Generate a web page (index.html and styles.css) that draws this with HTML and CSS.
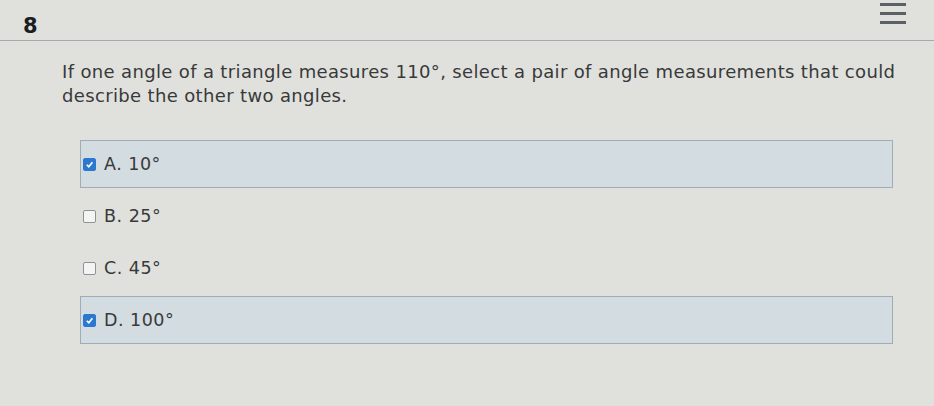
FILE: index.html
```html
<!DOCTYPE html>
<html lang="en">
<head>
    <meta charset="UTF-8">
    <title>Question 8</title>
    <link rel="stylesheet" href="styles.css">
</head>
<body>
<div class="header">
    <span class="number">8</span>
    <div class="menu">
        <span></span>
        <span></span>
        <span></span>
    </div>
</div>

<p class="question">If one angle of a triangle measures 110°, select a pair of angle measurements that could describe the other two angles.</p>

<div class="options">
    <label class="option selected">
        <span class="box checked"><svg viewBox="0 0 12 12"><path d="M3 6.3 L5.2 8.4 L9.2 3.6" /></svg></span>
        A. 10°
    </label>
    <label class="option">
        <span class="box"></span>
        B. 25°
    </label>
    <label class="option">
        <span class="box"></span>
        C. 45°
    </label>
    <label class="option selected">
        <span class="box checked"><svg viewBox="0 0 12 12"><path d="M3 6.3 L5.2 8.4 L9.2 3.6" /></svg></span>
        D. 100°
    </label>
</div>
</body>
</html>
```

FILE: styles.css
```css
body {
    margin: 0;
    background: #e0e1dc;
    font-family: "DejaVu Sans", Verdana, sans-serif;
    color: #38393b;
}

.header {
    height: 40px;
    display: flex;
    justify-content: space-between;
    padding: 0 28px 0 23px;
    border-bottom: 1px solid #a7abab;
}

.number {
    align-self: flex-end;
    margin-bottom: 2px;
    font-size: 21px;
    font-weight: bold;
    color: #1c1d1f;
}

.menu {
    display: flex;
    flex-direction: column;
    gap: 6px;
    margin-top: 3px;
}

.menu span {
    display: block;
    width: 26px;
    height: 3px;
    background: #5b6066;
}

.question {
    margin: 19px 30px 0 62px;
    font-size: 18px;
    line-height: 24px;
    letter-spacing: 0.35px;
}

.options {
    margin: 32px 41px 0 80px;
}

.option {
    display: flex;
    align-items: center;
    height: 46px;
    margin-bottom: 4px;
    padding-left: 2px;
    font-size: 17.5px;
    letter-spacing: 0.5px;
    border: 1px solid transparent;
}

.option.selected {
    background: #d3dce0;
    border-color: #9eadb6;
}

.box {
    width: 11px;
    height: 11px;
    margin-right: 8px;
    border: 1px solid #8d9298;
    border-radius: 2px;
    background: #f4f5f3;
}

.box.checked {
    background: #2b78cf;
    border-color: #2b78cf;
}

.box svg {
    display: block;
    width: 11px;
    height: 11px;
}

.box svg path {
    fill: none;
    stroke: #fff;
    stroke-width: 1.8;
}
```
